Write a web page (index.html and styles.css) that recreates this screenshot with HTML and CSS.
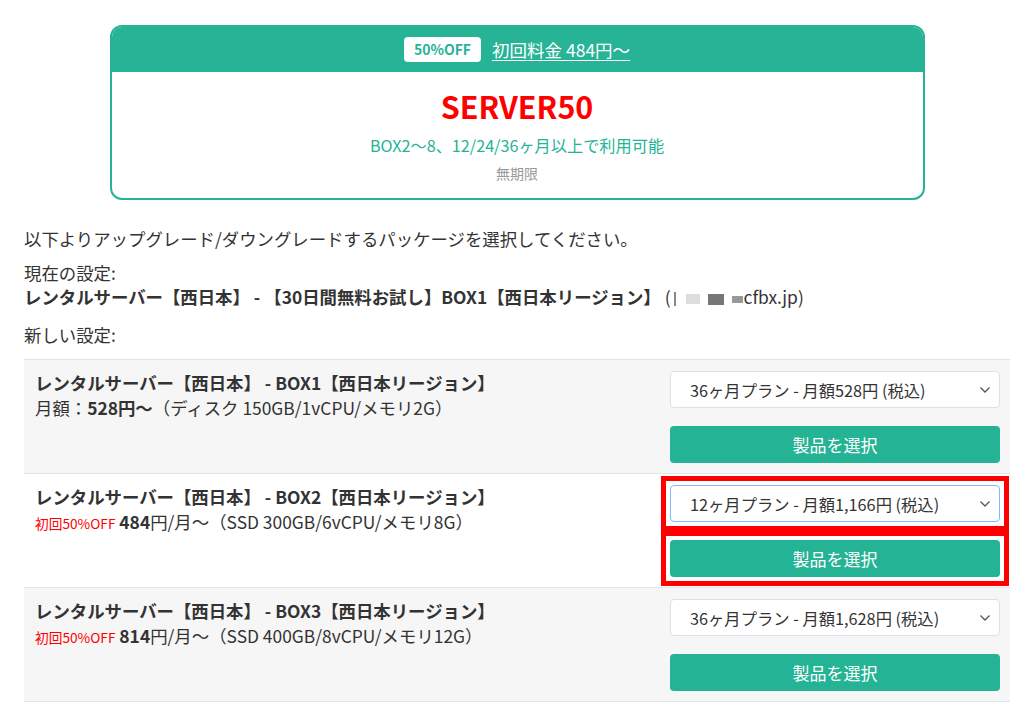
FILE: index.html
```html
<!DOCTYPE html>
<html lang="ja">
<head>
    <meta charset="UTF-8">
    <meta name="viewport" content="width=device-width, initial-scale=1.0">
    <title>パッケージのアップグレード/ダウングレード</title>
    <link rel="stylesheet" href="styles.css">
</head>
<body>
    <div class="page">

        <!-- Campaign box -->
        <div class="promo">
            <div class="promo-head">
                <span class="promo-badge">50%OFF</span>
                <a class="promo-link" href="#">初回料金 484円〜</a>
            </div>
            <div class="promo-body">
                <div class="promo-code">SERVER50</div>
                <div class="promo-cond">BOX2〜8、12/24/36ヶ月以上で利用可能</div>
                <div class="promo-limit">無期限</div>
            </div>
        </div>

        <p class="lead">以下よりアップグレード/ダウングレードするパッケージを選択してください。</p>

        <p class="current">
            現在の設定:<br>
            <strong>レンタルサーバー【西日本】 - 【30日間無料お試し】BOX1【西日本リージョン】</strong>
            (<span class="masked"><i class="m0"></i><i class="m1"></i><i class="m2"></i><i class="m3"></i></span>cfbx.jp)
        </p>

        <p class="new-label">新しい設定:</p>

        <!-- Package list -->
        <div class="packages">
            <div class="pkg-row">
                <div class="pkg-info">
                    <div class="pkg-name">レンタルサーバー【西日本】 - BOX1【西日本リージョン】</div>
                    <div class="pkg-price">月額：<b>528円〜</b>（ディスク 150GB/1vCPU/メモリ2G）</div>
                </div>
                <div class="pkg-actions">
                    <div class="select-wrap">
                        <select class="cycle">
                            <option>36ヶ月プラン - 月額528円 (税込)</option>
                        </select>
                        <svg class="chev" width="12" height="8" viewBox="0 0 12 8"><path d="M1.5 1.5 6 6l4.5-4.5" fill="none" stroke="#555" stroke-width="1.3"/></svg>
                    </div>
                    <div class="btn-wrap">
                        <button class="choose">製品を選択</button>
                    </div>
                </div>
            </div>

            <div class="pkg-row">
                <div class="pkg-info">
                    <div class="pkg-name">レンタルサーバー【西日本】 - BOX2【西日本リージョン】</div>
                    <div class="pkg-price"><span class="off">初回50%OFF</span> <b>484</b>円/月〜（SSD 300GB/6vCPU/メモリ8G）</div>
                </div>
                <div class="pkg-actions">
                    <div class="select-wrap marked">
                        <select class="cycle focused">
                            <option>12ヶ月プラン - 月額1,166円 (税込)</option>
                        </select>
                        <svg class="chev" width="12" height="8" viewBox="0 0 12 8"><path d="M1.5 1.5 6 6l4.5-4.5" fill="none" stroke="#555" stroke-width="1.3"/></svg>
                    </div>
                    <div class="btn-wrap marked">
                        <button class="choose">製品を選択</button>
                    </div>
                </div>
            </div>

            <div class="pkg-row">
                <div class="pkg-info">
                    <div class="pkg-name">レンタルサーバー【西日本】 - BOX3【西日本リージョン】</div>
                    <div class="pkg-price"><span class="off">初回50%OFF</span> <b>814</b>円/月〜（SSD 400GB/8vCPU/メモリ12G）</div>
                </div>
                <div class="pkg-actions">
                    <div class="select-wrap">
                        <select class="cycle">
                            <option>36ヶ月プラン - 月額1,628円 (税込)</option>
                        </select>
                        <svg class="chev" width="12" height="8" viewBox="0 0 12 8"><path d="M1.5 1.5 6 6l4.5-4.5" fill="none" stroke="#555" stroke-width="1.3"/></svg>
                    </div>
                    <div class="btn-wrap">
                        <button class="choose">製品を選択</button>
                    </div>
                </div>
            </div>
        </div>

    </div>
</body>
</html>
```

FILE: styles.css
```css
body {
    margin: 0;
    background-color: #fff;
    color: #333;
    font-family: "Noto Sans CJK JP", "Noto Sans", sans-serif;
    font-size: 17.4px;
}
.page {
    width: 986px;
    margin-left: 24px;
    padding-top: 25px;
    box-sizing: border-box;
}
.promo {
    width: 815px;
    margin: 0 auto;
    border: 2px solid #26b396;
    border-radius: 12px;
    overflow: hidden;
    box-sizing: border-box;
}
.promo-head {
    height: 45px;
    background-color: #26b396;
    display: flex;
    align-items: center;
    justify-content: center;
    gap: 11px;
}
.promo-badge {
    background-color: #fff;
    color: #26b396;
    font-size: 14px;
    font-weight: bold;
    padding: 0 10px;
    height: 25px;
    line-height: 25px;
    border-radius: 4px;
}
.promo-link {
    color: #fff;
    font-size: 17.5px;
    text-decoration: underline;
    text-underline-offset: 3px;
}
.promo-body {
    text-align: center;
    padding: 14px 0 15px;
}
.promo-code {
    color: #f00;
    font-size: 30.5px;
    font-weight: bold;
    line-height: 40px;
}
.promo-cond {
    color: #26b396;
    font-size: 16.2px;
    line-height: 22px;
    margin-top: 8px;
}
.promo-limit {
    color: #999;
    font-size: 14px;
    line-height: 20px;
    margin-top: 7px;
}
p {
    margin: 0;
    line-height: 24px;
}
.lead {
    margin-top: 27px;
}
.current {
    margin-top: 10px;
}
.current strong {
    font-weight: bold;
}
.masked {
    display: inline-flex;
    align-items: center;
    gap: 8px;
    margin: 0 0 0 3px;
    vertical-align: middle;
}
.masked i {
    display: inline-block;
}
.masked .m0 { width: 2px; height: 14px; background-color: #888; margin-right: 2px; }
.masked .m1 { width: 14px; height: 10px; background-color: #ddd; }
.masked .m2 { width: 16px; height: 11px; background-color: #777; }
.masked .m3 { width: 11px; height: 7px; background-color: #999; margin-right: 1px; }
.new-label {
    margin-top: 14px;
    margin-bottom: 12px;
}
.packages {
    border-bottom: 1px solid #dde6ef;
}
.pkg-row {
    display: flex;
    justify-content: space-between;
    height: 114px;
    box-sizing: border-box;
    border-top: 1px solid #dde6ef;
    padding: 11px 10px 0 11px;
    background-color: #f6f6f6;
}
.pkg-row:nth-child(2) {
    background-color: #fff;
}
.pkg-name {
    font-weight: bold;
    line-height: 24px;
}
.pkg-price {
    line-height: 26px;
}
.pkg-price b {
    font-weight: bold;
}
.off {
    color: #f00;
    font-size: 13.7px;
}
.pkg-actions {
    width: 330px;
    display: flex;
    flex-direction: column;
    gap: 18px;
}
.select-wrap {
    position: relative;
}
.cycle {
    display: block;
    width: 100%;
    height: 37px;
    appearance: none;
    -webkit-appearance: none;
    background-color: #fff;
    border: 1px solid #d6e2ee;
    border-radius: 4px;
    padding: 0 30px 0 19px;
    font-family: inherit;
    font-size: 16.3px;
    color: #333;
}
.cycle.focused {
    border-color: #86b7fe;
}
.chev {
    position: absolute;
    right: 9px;
    top: 15px;
}
.btn-wrap {
    display: flex;
}
.choose {
    flex: 1;
    height: 37px;
    border: none;
    border-radius: 4px;
    background-color: #24b394;
    color: #fff;
    font-family: inherit;
    font-size: 17px;
    cursor: pointer;
}
.marked {
    outline: 5px solid #f00;
    outline-offset: 4px;
}
```
